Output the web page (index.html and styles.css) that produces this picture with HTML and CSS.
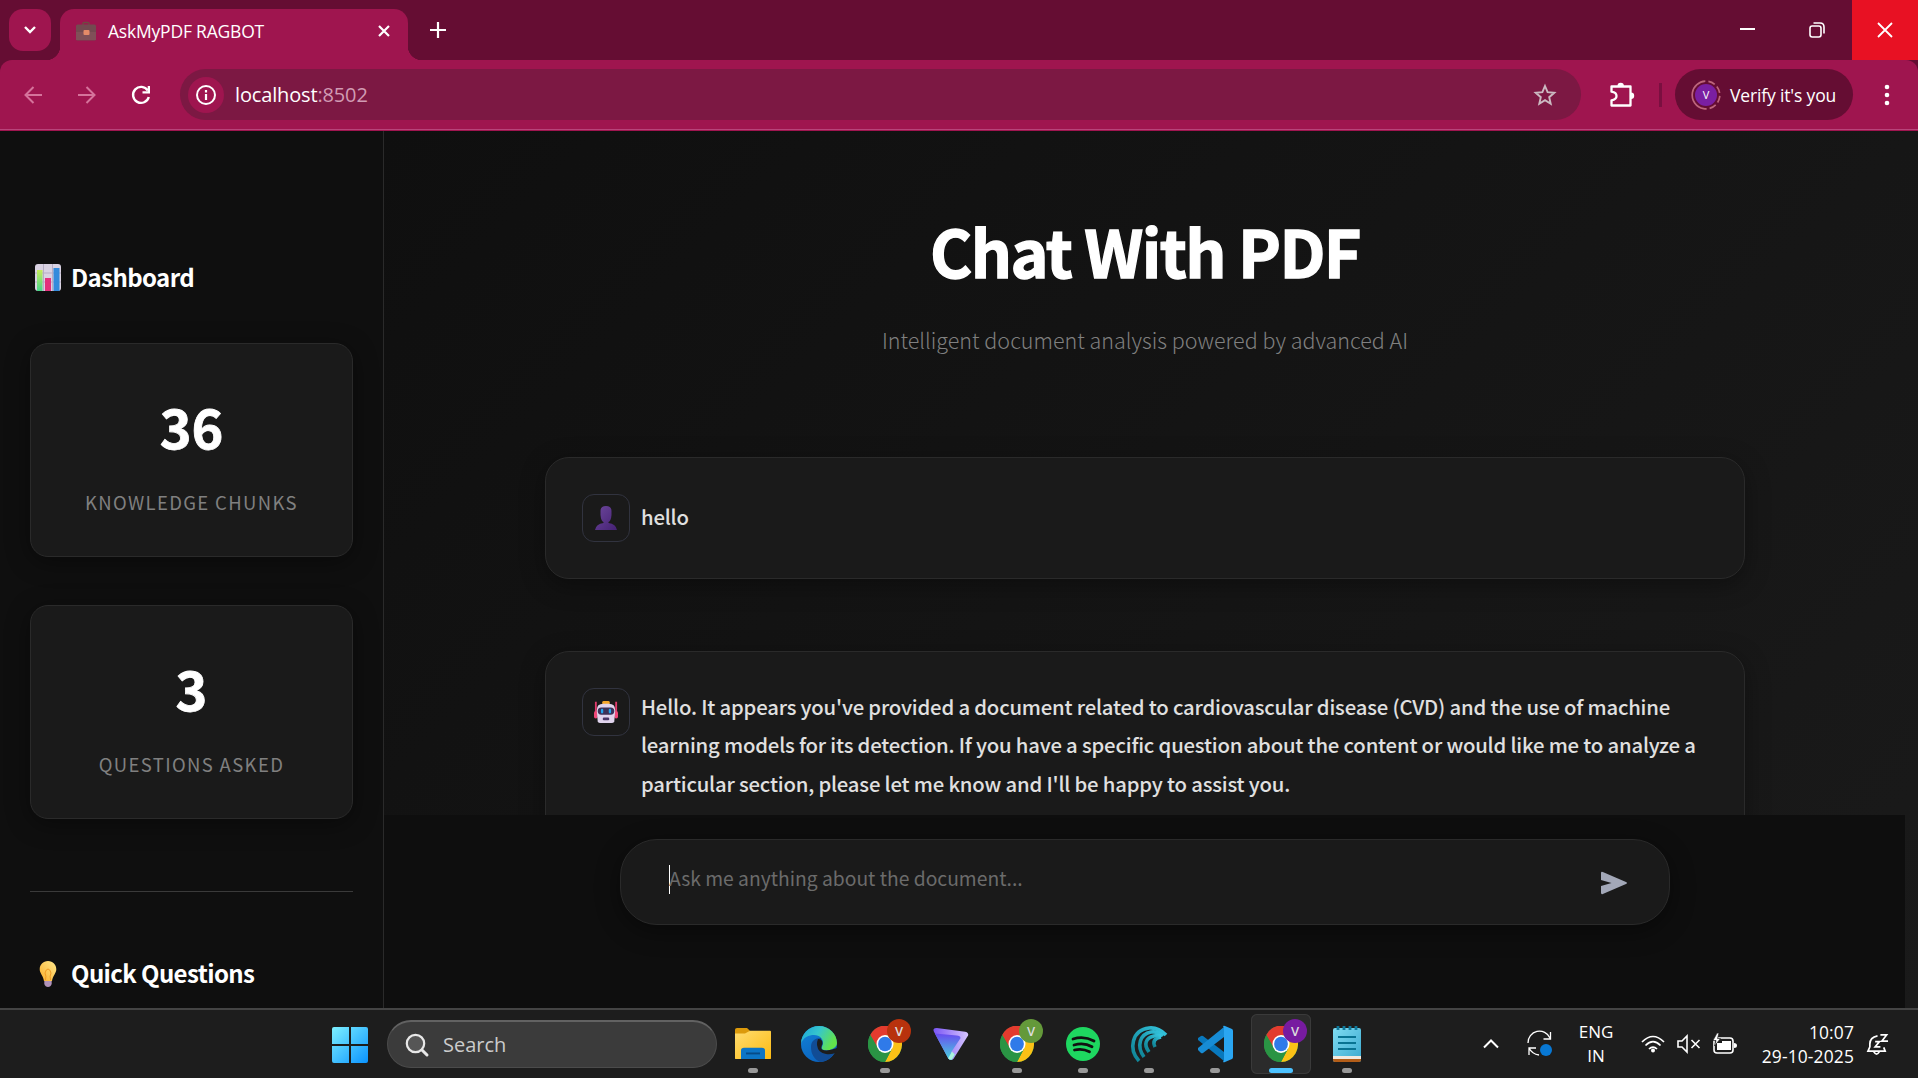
FILE: index.html
```html
<!DOCTYPE html>
<html lang="en">
<head>
<meta charset="utf-8">
<title>AskMyPDF RAGBOT</title>
<link rel="stylesheet" href="styles.css">
</head>
<body>
<svg width="0" height="0" class="defs" aria-hidden="true">
  <defs>
    <linearGradient id="win" x1="0" y1="0" x2="1" y2="1"><stop offset="0" stop-color="#7df0ff"/><stop offset="1" stop-color="#0a93ff"/></linearGradient>
    <linearGradient id="folder" x1="0" y1="0" x2="1" y2="1"><stop offset="0" stop-color="#ffdc70"/><stop offset="1" stop-color="#fdbb12"/></linearGradient>
    <linearGradient id="edgeTop" x1="0" y1="0" x2="1" y2=".4"><stop offset="0" stop-color="#1aa3d8"/><stop offset=".5" stop-color="#36c6cd"/><stop offset="1" stop-color="#62e34c"/></linearGradient>
    <linearGradient id="edgeLow" x1="0" y1="0" x2=".6" y2="1"><stop offset="0" stop-color="#1383d8"/><stop offset="1" stop-color="#0a62bd"/></linearGradient>
    <linearGradient id="vpnA" x1="0" y1="0" x2="1" y2="0"><stop offset="0" stop-color="#7a55f5"/><stop offset="1" stop-color="#d6c5ff"/></linearGradient>
    <linearGradient id="vpnB" x1="0" y1="0" x2="0" y2="1"><stop offset="0" stop-color="#6a4af0"/><stop offset="1" stop-color="#45d8dd"/></linearGradient>
    <linearGradient id="shell" x1="0" y1="1" x2="1" y2="0"><stop offset="0" stop-color="#0e8294"/><stop offset="1" stop-color="#35c5de"/></linearGradient>
    <linearGradient id="bar" x1="0" y1="0" x2="0" y2="1"><stop offset="0" stop-color="#c5ec5c"/><stop offset="1" stop-color="#48d58b"/></linearGradient>
    <linearGradient id="bulb" x1="0" y1="1" x2="1" y2="0"><stop offset="0" stop-color="#f9ad2b"/><stop offset="1" stop-color="#ffe98c"/></linearGradient>
    <linearGradient id="person" x1="0" y1="0" x2="1" y2="1"><stop offset="0" stop-color="#6c479b"/><stop offset="1" stop-color="#452174"/></linearGradient>
    <linearGradient id="pad" x1="0" y1="0" x2="1" y2="1"><stop offset="0" stop-color="#7fdcf2"/><stop offset="1" stop-color="#3aa9cf"/></linearGradient>
    <symbol id="chrome" viewBox="0 0 36 36">
      <circle cx="18" cy="18" r="18" fill="#2a9444"/>
      <path d="M2.400 9 10.500 22 18 18V9H34A18 18 0 0 0 2.400 9Z" fill="#e33b2e"/>
      <path d="M18 9.500H33.900A18 18 0 0 1 18 36L25.500 22.500Z" fill="#fbc116"/>
      <path d="M2.400 9A18 18 0 0 0 18 36L25.500 22.500 10.500 22.500Z" fill="#2a9444"/>
      <circle cx="18" cy="18" r="9" fill="#fff"/><circle cx="18" cy="18" r="7.300" fill="#2f7ae9"/>
    </symbol>
  </defs>
</svg>
<div class="screen">
  <header class="tabs">
    <button class="tab-search"><svg width="14" height="10" viewBox="0 0 14 10"><path d="m2 2 5 5 5-5" fill="none" stroke="#fff" stroke-width="2.400"/></svg></button>
    <div class="tab">
      <svg class="favicon" width="20" height="20" viewBox="0 0 20 20"><path d="M7 4V2.500Q7 1.500 8 1.500h4q1 0 1 1V4" fill="none" stroke="#6d4c41" stroke-width="1.400"/><rect y="3.500" width="20" height="16" rx="1.500" fill="#734a50"/><path d="M0 11h20v8H0z" fill="#805058"/><rect x="7.500" y="9" width="6" height="5" rx="1" fill="#e58a68"/></svg>
      <span class="tab-title">AskMyPDF RAGBOT</span>
      <svg class="tab-close" width="14" height="14" viewBox="0 0 14 14"><path d="m2 2 10 10M12 2 2 12" stroke="#fff" stroke-width="2.200"/></svg>
    </div>
    <svg class="new-tab" width="16" height="16" viewBox="0 0 16 16"><path d="M8 0v16M0 8h16" stroke="#fff" stroke-width="2.200"/></svg>
    <div class="window-controls">
      <span><svg width="16" height="16" viewBox="0 0 16 16"><path d="M0 7h15" stroke="#fff" stroke-width="2"/></svg></span>
      <span><svg width="16" height="16" viewBox="0 0 16 16" fill="none" stroke="#fff" stroke-width="1.600"><rect x="1" y="4" width="11" height="11" rx="2.200"/><path d="M4.500 1H11q4 0 4 4v6.500"/></svg></span>
      <span class="close"><svg width="16" height="16" viewBox="0 0 16 16"><path d="m1 1 14 14M15 1 1 15" stroke="#fff" stroke-width="1.800"/></svg></span>
    </div>
  </header>
  <nav class="toolbar">
    <svg class="back" width="18" height="18" viewBox="0 0 18 18"><path d="M18 9H2M9.500 1 1.500 9l8 8" fill="none" stroke="#d5739b" stroke-width="2"/></svg>
    <svg class="forward" width="18" height="18" viewBox="0 0 18 18"><path d="M0 9h16M8.500 1l8 8-8 8" fill="none" stroke="#d5739b" stroke-width="2"/></svg>
    <svg class="reload" width="20" height="20" viewBox="0 0 20 20"><path d="M16.800 5.500A8 8 0 1 0 17.800 12" fill="none" stroke="#fff" stroke-width="2.400"/><path d="M19 1v7.500h-7.500V6.200h5.200V1z" fill="#fff"/></svg>
    <div class="omnibox">
      <span class="site-info"><svg width="20" height="20" viewBox="0 0 20 20"><circle cx="10" cy="10" r="9" fill="none" stroke="#fff" stroke-width="2"/><path d="M10 9v6M10 5v2.400" stroke="#fff" stroke-width="2.200"/></svg></span>
      <span class="url">localhost<i>:8502</i></span>
      <svg class="star" width="24" height="24" viewBox="0 0 24 24"><path d="m12 3 2.600 6.200 6.700.6-5.100 4.400 1.500 6.500L12 17.200l-5.700 3.500 1.500-6.500-5.100-4.400 6.700-.6z" fill="none" stroke="#cbb9c1" stroke-width="1.900"/></svg>
    </div>
    <svg class="puzzle" width="26" height="26" viewBox="0 0 26 26"><path d="M2.500 4.500h19v19h-19v-5.200q5-.8 5-4.300t-5-4.300z" fill="none" stroke="#fff" stroke-width="2.300" stroke-linejoin="round"/><path d="M8.500 4a3.200 3.200 0 0 1 6.400 0M22 10.500a3.200 3.200 0 0 1 0 6.400" fill="#fff"/></svg>
    <span class="separator"></span>
    <div class="profile">
      <svg width="30" height="30" viewBox="0 0 30 30"><circle cx="15" cy="15" r="13.800" fill="none" stroke="#bd667c" stroke-width="1.700" stroke-dasharray="7 3 7 3 7 3 7 3 43 4"  transform="rotate(-80 15 15)"/><circle cx="15" cy="15" r="11" fill="#7a1fa2"/><text x="15" y="19" text-anchor="middle" class="profile-letter">V</text></svg>
      <span>Verify it's you</span>
    </div>
    <svg class="menu" width="6" height="22" viewBox="0 0 6 22" fill="#fff"><circle cx="3" cy="3" r="2.300"/><circle cx="3" cy="11" r="2.300"/><circle cx="3" cy="19" r="2.300"/></svg>
  </nav>
  <div class="page">
    <aside class="sidebar">
      <h2><svg width="26" height="27" viewBox="0 0 26 27"><rect width="26" height="27" rx="3" fill="#d9d2e2"/><path d="M8.500 0v27M17.500 0v27M0 9h26M0 18h26" stroke="#b6adc4"/><path d="M2 6h5.500v21H2z" fill="url(#bar)"/><path d="M10 14h6v13h-6z" fill="#e4317c"/><path d="M18.500 4h6v23h-6z" fill="#338bdc"/></svg><span>Dashboard</span></h2>
      <section class="metric"><strong>36</strong><span>KNOWLEDGE CHUNKS</span></section>
      <section class="metric"><strong>3</strong><span>QUESTIONS ASKED</span></section>
      <hr>
      <h2><svg width="26" height="27" viewBox="0 0 26 27"><path d="M13 1c-5 0-8.300 3.700-8.300 8.200 0 4 3.600 6.600 4.300 11.800h8c.7-5.200 4.300-7.800 4.300-11.800C21.300 4.700 18 1 13 1z" fill="url(#bulb)"/><path d="M10.500 20q1-4-.5-7 1-4 3-4t3 4q-1.500 3-.5 7" fill="none" stroke="#ee9a24"/><path d="M9.300 21h7.400v3q-1 3-3.700 3t-3.700-3z" fill="#af92b9"/></svg><span>Quick Questions</span></h2>
    </aside>
    <main>
      <div class="thread">
        <h1>Chat With PDF</h1>
        <p class="subtitle">Intelligent document analysis powered by advanced AI</p>
        <article class="message">
          <span class="avatar"><svg width="24" height="26" viewBox="0 0 24 26"><path d="M6.500 6Q6.500 1 12 1t5.500 5v4Q17 16 14.500 17v1q7.500 1 8.500 7H1q1-6 8.500-7v-1Q7 16 6.500 10z" fill="url(#person)"/></svg></span>
          <p class="hello">hello</p>
        </article>
        <article class="message">
          <span class="avatar"><svg width="24" height="26" viewBox="0 0 26 26"><path d="M2 2v17M24 2v17" stroke="#e23b6d" stroke-width="2"/><rect x="9" y="1" width="8" height="5" rx="1.500" fill="#f4a62a"/><rect y="12" width="4" height="8" rx="2" fill="#ef4779"/><rect x="22" y="12" width="4" height="8" rx="2" fill="#ef4779"/><path d="M3 11Q3 4 10 4h6q7 0 7 7l-1 12q-.5 2-3 2H7q-2.500 0-3-2z" fill="#e0d4ed"/><rect x="4" y="8" width="18" height="8" rx="4" fill="#3c3157"/><rect x="7.500" y="9.500" width="2.500" height="5" rx="1.200" fill="#24a5ed"/><rect x="16" y="9.500" width="2.500" height="5" rx="1.200" fill="#24a5ed"/><rect x="9.500" y="19" width="7" height="3" rx="1.200" fill="#493767"/></svg></span>
          <p>Hello. It appears you've provided a document related to cardiovascular disease (CVD) and the use of machine<br>learning models for its detection. If you have a specific question about the content or would like me to analyze a<br>particular section, please let me know and I'll be happy to assist you.</p>
        </article>
      </div>
      <footer>
        <div class="chat-input"><span class="caret"></span><span class="placeholder">Ask me anything about the document...</span>
          <svg width="28" height="24" viewBox="0 0 28 24"><path d="M1 2.200Q1 .3 2.800 1L26 11q2 1 0 2L2.800 23Q1 23.700 1 21.800V15l10.500-3L1 9z" fill="#a3a8b8"/></svg>
        </div>
      </footer>
    </main>
  </div>
  <div class="taskbar">
    <svg class="start" width="36" height="36" viewBox="0 0 36 36" fill="url(#win)"><path d="M2 0h15v17H0V2q0-2 2-2zM19 0h15q2 0 2 2v15H19zM0 19h17v17H2q-2 0-2-2zM19 19h17v15q0 2-2 2H19z"/></svg>
    <div class="search"><svg width="24" height="24" viewBox="0 0 24 24"><circle cx="10.500" cy="10.500" r="8.700" fill="#565656" stroke="#e8e8e8" stroke-width="2.200"/><path d="m17 17 5 5" stroke="#e8e8e8" stroke-width="3" stroke-linecap="round"/></svg><span>Search</span></div>
    <div class="apps">
      <span class="app open"><svg width="36" height="34" viewBox="0 0 36 36" preserveAspectRatio="none"><path d="M0 3q0-2 2-2h10l3 3-3 5H0z" fill="#dc9a0b"/><path d="M0 7h10l5-3h20q1 0 1 1v28q0 1-1 1H1q-1 0-1-1z" fill="url(#folder)"/><path d="M6 34V25q0-3 3-3h18q3 0 3 3v9z" fill="#0c75c6"/><path d="M11 28h14" stroke="#064b87" stroke-width="2"/></svg></span>
      <span class="app"><svg width="36" height="36" viewBox="0 0 36 36"><circle cx="18" cy="18" r="18" fill="url(#edgeLow)"/><path d="M10 21c0-6 4-9 10-9 0 4-3 7-1 11 2 4 9 6 15 2-3 7-9 11-15 11-6-3-9-8-9-15z" fill="#114c95"/><path d="M18 0C8 0 0 8 0 18 2 11 8 9 13 9c6 0 9 4 9 8 0 3-2 4-1 6 2 3 15 1 15-6C36 8 28 0 18 0z" fill="url(#edgeTop)"/><path d="M17 13q5 0 4.500 5-2 4-.5 5.500Q26 26 36 22v4q-5 3-11 2-8-1-9-9 0-4 1-6z" fill="#1d1d1d"/></svg></span>
      <span class="app open"><svg width="34" height="36" viewBox="0 0 36 36" preserveAspectRatio="none"><use href="#chrome" width="36" height="36"/></svg><b class="red">V</b></span>
      <span class="app"><svg width="36" height="36" viewBox="0 0 38 36"><path d="M1 5q-2-4 3-4l30 4q4 1 3 4L22 33q-3 4-6 0z" fill="url(#vpnA)"/><path d="M2 7 16 33q2 3 4 1l3-5-4-2 10-15q0-3-4-3z" fill="url(#vpnB)"/><path d="m20 26 3 3-3 5q-2 1-4-1z" fill="#abf3dd"/></svg></span>
      <span class="app open"><svg width="34" height="36" viewBox="0 0 36 36" preserveAspectRatio="none"><use href="#chrome" width="36" height="36"/></svg><b class="green">V</b></span>
      <span class="app open"><svg width="34" height="34" viewBox="0 0 34 34"><circle cx="17" cy="17" r="17" fill="#1ed760"/><path d="M7 12q11-3.500 21 2M8 18q10-3 18 1.800M8.500 23q8-2 15 1.800" fill="none" stroke="#111" stroke-width="2.800" stroke-linecap="round"/></svg></span>
      <span class="app open"><svg width="36" height="36" viewBox="0 0 36 36"><g fill="none" stroke="url(#shell)" stroke-width="3.600"><path d="M8 35C-3 23 1 4 18 2q9-1 17 7"/><path d="M13 31C5 20 9 8 20 6q7-1 12 4"/><path d="M18 26C12 18 15 12 23 10q4-1 7 0"/><path d="M24 21q-4-8 6-10"/></g></svg></span>
      <span class="app open"><svg width="36" height="36" viewBox="0 0 36 36"><path d="m1 12 3-2q1-.5 2 0l21 16v9L1 14z" fill="#0878bd"/><path d="m1 24 3 3q1 .5 2 0L27 11V1L1 22z" fill="#178cd5"/><path d="M26 0q1-.5 2 0l7 3q1 .5 1 2v26q0 1.500-1 2l-7 3q-1 .5-2 0l1-2V2z" fill="#2aa6f2"/></svg></span>
      <span class="app open active"><svg width="34" height="36" viewBox="0 0 36 36" preserveAspectRatio="none"><use href="#chrome" width="36" height="36"/></svg><b class="purple">V</b></span>
      <span class="app open"><svg width="28" height="36" viewBox="0 0 28 36"><rect y="2" width="28" height="34" rx="2" fill="url(#pad)"/><path d="M0 30h28v3H0z" fill="#f1e9df"/><path d="M0 33h28v1q0 2-2 2H2q-2 0-2-2z" fill="#b35d18"/><path d="M5 0v4M11 0v4M17 0v4M23 0v4" stroke="#0f799b" stroke-width="2.800"/><path d="M5 11h18M5 17h18M5 23h18" stroke="#087392" stroke-width="2"/></svg></span>
    </div>
    <div class="tray">
      <svg class="up" width="16" height="10" viewBox="0 0 16 10"><path d="m1 8.500 7-7 7 7" fill="none" stroke="#fff" stroke-width="2"/></svg>
      <svg class="sync" width="26" height="26" viewBox="0 0 26 26"><path d="M1 12A11.500 11.500 0 0 1 23 7M23.500 1v7h-7M2 24v-7h7M2 17q3 6 10 7" fill="none" stroke="#fff" stroke-width="1.300"/><circle cx="19" cy="19" r="6" fill="#0878d4"/></svg>
      <div class="lang">ENG<br>IN</div>
      <svg class="wifi" width="24" height="18" viewBox="0 0 24 18"><path d="M1 7q11-11 22 0M4.500 10.500q7.500-7.500 15 0M8 14q4-4 8 0" fill="none" stroke="#fff" stroke-width="1.700"/><circle cx="12" cy="15.500" r="2" fill="#fff"/></svg>
      <svg class="volume" width="24" height="18" viewBox="0 0 24 18" fill="none" stroke="#fff" stroke-width="1.600"><path d="M1 6h4l5-5v16l-5-5H1zM14.500 5l8 8M22.500 5l-8 8"/></svg>
      <svg class="battery" width="24" height="20" viewBox="0 0 24 20"><rect x="1" y="4" width="19" height="15" rx="3" fill="none" stroke="#fff" stroke-width="1.600"/><path d="M4 16V9h5V7h9v9zM21 9q3 0 3 2.500T21 14z" fill="#fff"/><path d="M4-1 0 6.500h3L1.500 12 7.500 4.500h-3L6-1z" fill="#fff" stroke="#1d1d1d" stroke-width=".7"/></svg>
      <time>10:07<br>29-10-2025</time>
      <svg class="bell" width="22" height="23" viewBox="0 0 23 23" fill="none" stroke="#fff" stroke-width="1.800"><path d="M11 2.500Q3 4 3 11v3l-2 4.500h18l-1.500-4M7 19q3 5 6 0M14 1.500h6.500L15.500 8H22M8.500 8.500H13L8.500 14H14"/></svg>
    </div>
  </div>
</div>
</body>
</html>
```
FILE: styles.css
```css
* { box-sizing: border-box; }
body { margin: 0; background: #0e0e0e; font-family: "Noto Sans CJK JP", sans-serif; }
.defs { position: absolute; }
svg { display: block; flex: none; overflow: visible; }
h1, h2, p { margin: 0; }
.screen { width: 1918px; height: 1078px; display: flex; flex-direction: column; overflow: hidden; background: #650d33; }
.tabs, .toolbar, .taskbar { font-family: "Open Sans", sans-serif; color: #fff; flex: none; white-space: nowrap; }

.tabs { height: 60px; display: flex; align-items: flex-start; }
.tab-search { width: 42px; height: 42px; margin: 9px 9px 0; padding: 0; border: 0; border-radius: 14px; background: #9f154f; display: grid; place-items: center; }
.tab { width: 348px; height: 51px; margin-top: 9px; border-radius: 14px 14px 0 0; background: #9f154f; display: flex; align-items: center; padding: 0 17px 8px 16px; position: relative; }
.tab::before, .tab::after { content: ""; position: absolute; bottom: 0; width: 14px; height: 14px; }
.tab::before { left: -14px; background: radial-gradient(circle at 0 0, transparent 14px, #9f154f 14.5px); }
.tab::after { right: -14px; background: radial-gradient(circle at 100% 0, transparent 14px, #9f154f 14.5px); }
.tab-title { margin-left: 12px; font-size: 17.5px; letter-spacing: -.2px; }
.tab-close { margin-left: auto; }
.new-tab { margin: 22px 0 0 22px; }
.window-controls { margin-left: auto; display: flex; }
.window-controls span { width: 69px; height: 60px; display: grid; place-items: center; padding-right: 2px; }
.window-controls .close { width: 66px; background: #e81123; padding-right: 0; }

.toolbar { height: 71px; border-radius: 12px 12px 0 0; background: linear-gradient(#b8447a, #b8447a) 0 69px / 100% 1px no-repeat #9f154f; display: flex; align-items: center; padding: 0 0 2px 24px; }
.forward { margin-left: 36px; }
.reload { margin-left: 35px; }
.omnibox { width: 1401px; height: 51px; margin-left: 29px; border-radius: 26px; background: #7c1843; display: flex; align-items: center; padding: 0 24px 0 8px; }
.site-info { width: 36px; height: 36px; border-radius: 50%; background: #9f154f; display: grid; place-items: center; }
.url { font-size: 20px; margin-left: 11px; letter-spacing: -.15px; }
.url i { font-style: normal; color: #d19bb3; }
.star { margin-left: auto; }
.puzzle { margin-left: 28px; }
.separator { width: 3px; height: 24px; background: #7a0f40; margin-left: 24px; }
.profile { width: 178px; height: 51px; border-radius: 26px; background: #650d33; margin-left: 13px; padding-left: 16px; display: flex; align-items: center; gap: 9px; font-size: 17.5px; letter-spacing: -.15px; }
.profile-letter { font: 11px "Open Sans", sans-serif; fill: #fff; }
.menu { margin-left: 31px; }

.page { height: 877px; display: flex; flex: none; overflow: hidden; background: #0f0f0f; }
.sidebar { width: 384px; border-right: 1px solid #2a2a2a; background: #0f0f0f; padding: 128px 30px 0; overflow: hidden; }
.sidebar h2 { height: 36px; padding-left: 5px; display: flex; align-items: center; gap: 10px; color: #fff; font-size: 24px; line-height: 36px; letter-spacing: -.6px; font-weight: 700; }
.metric { height: 214px; margin-top: 48px; border: 1px solid #2a2a2a; border-radius: 18px; background: #1a1a1a; box-shadow: 0 5px 24px rgba(0,0,0,.4); display: flex; flex-direction: column; align-items: center; padding-top: 46px; }
.metric strong { font-size: 54px; line-height: 72px; color: #fff; font-weight: 700; -webkit-text-stroke: .8px #fff; }
.metric span { font-size: 18.5px; line-height: 28px; margin-top: 26px; color: #808080; letter-spacing: 1.35px; }
.sidebar hr { border: 0; height: 1px; margin: 72px 0 63px; background: #3a3a3a; }

main { flex: 1; min-width: 0; display: flex; flex-direction: column; background: linear-gradient(135deg, #0f0f0f, #1a1a1a); }
.thread { height: 684px; flex: none; overflow: hidden; padding: 71px 173px 0 161px; }
h1 { font-size: 64.5px; line-height: 96px; font-weight: 700; letter-spacing: -1.6px; text-align: center; color: #fff; -webkit-text-stroke: 1.3px #fff; }
.subtitle { margin-top: 22px; height: 137px; font-size: 21.5px; line-height: 40px; font-weight: 300; color: #808080; text-align: center; }
.message { width: 1200px; border: 1px solid #2a2a2a; border-radius: 24px; background: #1a1a1a; box-shadow: 0 6px 24px rgba(0,0,0,.35); padding: 36px; display: flex; gap: 11px; }
.message + .message { margin-top: 72px; }
.avatar { width: 48px; height: 48px; flex: none; border: 1px solid #31333f; border-radius: 12px; display: grid; place-items: center; }
.message p { font-size: 20.3px; line-height: 38.4px; font-weight: 500; letter-spacing: -.18px; color: #e0e0e0; white-space: nowrap; margin-top: -1px; }
.message .hello { padding-top: 4px; }
footer { height: 193px; margin-right: 13px; background: #0e0e0e; padding: 24px 235px 0 236px; }
.chat-input { height: 86px; border: 1px solid #2a2a2a; border-radius: 37px; background: #1a1a1a; box-shadow: 0 6px 24px rgba(0,0,0,.4); display: flex; align-items: center; padding: 0 41px 0 48px; }
.caret { width: 1px; height: 29px; background: #fff; margin: 0 -1px 6px 0; }
.placeholder { font-size: 19.3px; line-height: 30px; color: #6b6b6b; margin-bottom: 9px; }
.chat-input svg { margin: 2px 0 0 auto; }

.taskbar { height: 70px; border-top: 2px solid #444; background: #1d1d1d; display: flex; align-items: flex-start; padding-left: 332px; }
.start { margin-top: 17px; }
.search { width: 330px; height: 48px; margin: 10px 0 0 19px; border-radius: 24px; border: 1px solid #4b4b4b; border-top: 2px solid #626262; background: #3b3b3b; display: flex; align-items: center; gap: 14px; padding-left: 17px; font-size: 20px; color: #ccc; }
.apps { display: flex; padding: 4px 0 0 3px; }
.app { width: 60px; height: 60px; margin: 0 3px; border-radius: 6px; position: relative; display: grid; place-items: center; }
.app b { position: absolute; right: 4px; top: 5px; width: 24px; height: 24px; border-radius: 50%; font-size: 13px; line-height: 24px; text-align: center; font-weight: 600; color: #ddd; }
.red { background: #b8320d; }
.green { background: #64993a; }
.purple { background: #771ba0; }
.app.open::after { content: ""; position: absolute; left: 25px; bottom: 1px; width: 10px; height: 5px; border-radius: 3px; background: #999; }
.active { background: #2b2b2b; box-shadow: inset 0 0 0 1px #3a3a3a; }
.app.active::after { left: 18px; width: 24px; background: #4cc2ff; }
.tray { margin-left: auto; width: 435px; height: 68px; display: flex; align-items: center; font-size: 17px; line-height: 24px; }
.sync { margin-left: 28px; }
.lang { width: 44px; margin-left: 21px; text-align: center; }
.wifi { margin-left: 23px; }
.volume { margin-left: 12px; }
.battery { margin-left: 12px; }
time { width: 110px; margin-left: 7px; text-align: right; font-size: 17.4px; letter-spacing: .15px; }
.bell { margin-left: 13px; }
```
